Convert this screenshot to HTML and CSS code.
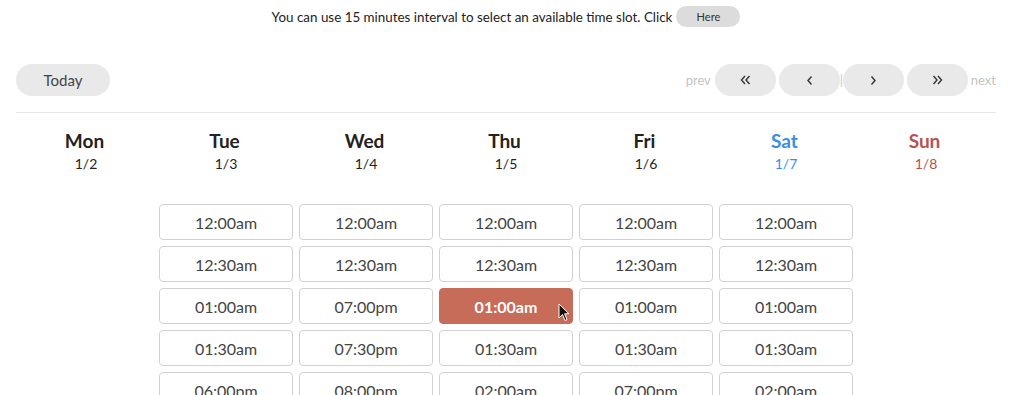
FILE: index.html
```html
<!DOCTYPE html>
<html>
<head>
<meta charset="utf-8">
<link rel="stylesheet" href="styles.css">
</head>
<body>
<div class="notice">You can use 15 minutes interval to select an available time slot. Click <button class="here">Here</button></div>
<div class="page">
  <div class="toolbar">
    <button class="today">Today</button>
    <div class="nav">
      <span class="navlabel">prev</span>
      <button class="navbtn" aria-label="previous month"><svg width="11" height="10" viewBox="0 0 11 10"><path d="M5 1 L1.5 5 L5 9 M9.5 1 L6 5 L9.5 9" fill="none" stroke="#333" stroke-width="1.4"/></svg></button>
      <button class="navbtn" aria-label="previous week"><svg width="7" height="11" viewBox="0 0 7 11"><path d="M5.5 1.5 L2 5.5 L5.5 9.5" fill="none" stroke="#333" stroke-width="1.4"/></svg></button>
      <span class="sep">|</span>
      <button class="navbtn" aria-label="next week"><svg width="7" height="11" viewBox="0 0 7 11"><path d="M1.5 1.5 L5 5.5 L1.5 9.5" fill="none" stroke="#333" stroke-width="1.4"/></svg></button>
      <button class="navbtn" aria-label="next month"><svg width="11" height="10" viewBox="0 0 11 10"><path d="M1.5 1 L5 5 L1.5 9 M6 1 L9.5 5 L6 9" fill="none" stroke="#333" stroke-width="1.4"/></svg></button>
      <span class="navlabel">next</span>
    </div>
  </div>
  <div class="week">
    <div class="day">
      <div class="dname">Mon</div><div class="ddate">1/2</div>
      <div class="slots"></div>
    </div>
    <div class="day">
      <div class="dname">Tue</div><div class="ddate">1/3</div>
      <div class="slots">
        <div class="slot">12:00am</div>
        <div class="slot">12:30am</div>
        <div class="slot">01:00am</div>
        <div class="slot">01:30am</div>
        <div class="slot">06:00pm</div>
      </div>
    </div>
    <div class="day">
      <div class="dname">Wed</div><div class="ddate">1/4</div>
      <div class="slots">
        <div class="slot">12:00am</div>
        <div class="slot">12:30am</div>
        <div class="slot">07:00pm</div>
        <div class="slot">07:30pm</div>
        <div class="slot">08:00pm</div>
      </div>
    </div>
    <div class="day">
      <div class="dname">Thu</div><div class="ddate">1/5</div>
      <div class="slots">
        <div class="slot">12:00am</div>
        <div class="slot">12:30am</div>
        <div class="slot selected">01:00am
          <svg class="cursor" width="12" height="19" viewBox="0 0 12 19"><path d="M1 1 L1 15 L4.5 11.5 L7 17.5 L9 16.6 L6.6 10.8 L11 10.8 Z" fill="#111" stroke="#fff" stroke-width="1"/></svg>
        </div>
        <div class="slot">01:30am</div>
        <div class="slot">02:00am</div>
      </div>
    </div>
    <div class="day">
      <div class="dname">Fri</div><div class="ddate">1/6</div>
      <div class="slots">
        <div class="slot">12:00am</div>
        <div class="slot">12:30am</div>
        <div class="slot">01:00am</div>
        <div class="slot">01:30am</div>
        <div class="slot">07:00pm</div>
      </div>
    </div>
    <div class="day sat">
      <div class="dname">Sat</div><div class="ddate">1/7</div>
      <div class="slots">
        <div class="slot">12:00am</div>
        <div class="slot">12:30am</div>
        <div class="slot">01:00am</div>
        <div class="slot">01:30am</div>
        <div class="slot">02:00am</div>
      </div>
    </div>
    <div class="day sun">
      <div class="dname">Sun</div><div class="ddate">1/8</div>
      <div class="slots"></div>
    </div>
  </div>
</div>
</body>
</html>
```

FILE: styles.css
```css
html, body {
  margin: 0;
  padding: 0;
  background: #fff;
  overflow: hidden;
}
body {
  font-family: Lato, "Open Sans", sans-serif;
  color: #333;
}
button {
  font-family: inherit;
  border: none;
  cursor: pointer;
}
.notice {
  display: flex;
  align-items: center;
  justify-content: center;
  padding-top: 6px;
  height: 21px;
  font-size: 13.4px;
  color: #222;
  gap: 4px;
  padding-left: 2px;
}
.here {
  width: 64px;
  height: 21px;
  border-radius: 11px;
  background: #dcdcdc;
  font-size: 11px;
  color: #333;
  padding: 0;
}
.page {
  margin: 37px 14px 0 16px;
}
.toolbar {
  display: flex;
  justify-content: space-between;
  align-items: center;
  padding-bottom: 16px;
  border-bottom: 1px solid #e6e6e6;
}
.today {
  width: 94px;
  height: 32px;
  border-radius: 16px;
  background: #e9e9e9;
  font-size: 15px;
  color: #444;
  padding: 0;
}
.nav {
  display: flex;
  align-items: center;
  gap: 3px;
}
.navlabel {
  font-size: 13px;
  color: #c4c4c4;
}
.navlabel:first-child { margin-right: 1px; }
.navbtn {
  width: 61px;
  height: 32px;
  border-radius: 16px;
  background: #e9e9e9;
  padding: 0;
  display: flex;
  align-items: center;
  justify-content: center;
}
.sep {
  position: relative;
  z-index: 1;
  width: 3px;
  text-align: center;
  color: #c8c8c8;
  font-size: 13px;
  margin: 0 -3px;
}
.week {
  display: grid;
  grid-template-columns: repeat(7, 140px);
  padding-top: 17px;
}
.day {
  text-align: center;
}
.dname {
  font-size: 19px;
  font-weight: 700;
  line-height: 22px;
  color: #222;
  padding-right: 3px;
}
.ddate {
  font-size: 14px;
  line-height: 20px;
  color: #222;
  margin-top: 2px;
}
.sat .dname, .sat .ddate { color: #3b8ee8; }
.sun .dname, .sun .ddate { color: #b8524f; }
.slots {
  display: flex;
  flex-direction: column;
  gap: 6px;
  padding: 30px 3px 0 3px;
}
.slot {
  position: relative;
  height: 34px;
  border: 1px solid #d2d2d2;
  border-radius: 4px;
  display: flex;
  align-items: center;
  justify-content: center;
  font-size: 16px;
  color: #444;
}
.slot.selected {
  background: #c76c58;
  border-color: #c76c58;
  color: #fff;
  font-weight: 700;
}
.cursor {
  position: absolute;
  left: 118px;
  top: 14px;
}
```
